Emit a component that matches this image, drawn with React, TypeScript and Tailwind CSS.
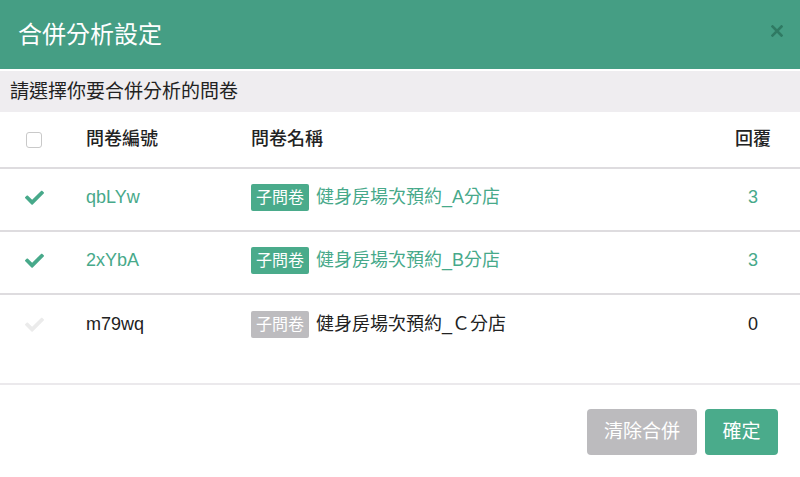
import React from "react";

const font = { fontFamily: '"Liberation Sans", "Noto Sans CJK TC", "Noto Sans", sans-serif' };

function Check({ active }: { active: boolean }) {
  return (
    <svg width="19" height="15" viewBox="0 0 512 400" className={active ? "text-[#47a98a]" : "text-[#ebebeb]"}>
      <path
        fill="currentColor"
        d="M173.9 389.8L7.5 223.4c-10-10-10-26.2 0-36.2l36.2-36.2c10-10 26.2-10 36.2 0L192 263.1 432.1 23c10-10 26.2-10 36.2 0l36.2 36.2c10 10 10 26.2 0 36.2L210.1 389.8c-10 10-26.2 10-36.2 0z"
      />
    </svg>
  );
}

const rows = [
  { id: "qbLYw", name: "健身房場次預約_A分店", reply: "3", on: true },
  { id: "2xYbA", name: "健身房場次預約_B分店", reply: "3", on: true },
  { id: "m79wq", name: "健身房場次預約_Ｃ分店", reply: "0", on: false },
];

export default function App() {
  return (
    <div className="w-[800px] h-[477px] bg-white flex flex-col overflow-hidden" style={font}>
      <div className="h-[69px] bg-[#459e84] flex items-center justify-between pl-[18px] pr-[17px] shrink-0">
        <span className="text-white text-[24px] leading-none">合併分析設定</span>
        <svg width="12" height="12" viewBox="0 0 12 12" className="mb-[8px]">
          <path d="M1.5 1.5L10.5 10.5M10.5 1.5L1.5 10.5" stroke="#2f7a63" strokeWidth="2.6" strokeLinecap="square" />
        </svg>
      </div>
      <div className="mt-[2px] h-[41px] bg-[#efedf0] flex items-center pl-[10px] text-[19px] text-[#222] shrink-0 leading-none">
        請選擇你要合併分析的問卷
      </div>
      <div className="flex flex-col">
        <div className="h-[57px] flex items-center border-b-2 border-[#dedcdf] text-[18px] text-[#222] font-medium">
          <div className="w-[86px] pl-[26px] flex items-center">
            <span className="w-[16px] h-[16px] border border-[#c9c9c9] rounded-[3px] bg-white"></span>
          </div>
          <div className="w-[165px]">問卷編號</div>
          <div className="flex-1">問卷名稱</div>
          <div className="w-[94px] text-center">回覆</div>
        </div>
        {rows.map((r, i) => (
          <div
            key={r.id}
            className={`h-[63px] flex items-center text-[18px] pb-[4px] ${i < rows.length - 1 ? "border-b-2 border-[#dedcdf]" : ""} ${r.on ? "text-[#47a98a]" : "text-[#222]"}`}
          >
            <div className="w-[86px] pl-[25px] flex items-center">
              <Check active={r.on} />
            </div>
            <div className="w-[165px]">{r.id}</div>
            <div className="flex-1 flex items-center gap-[7px]">
              <span
                className={`px-[5px] h-[27px] flex items-center rounded-[2px] text-white text-[16px] ${r.on ? "bg-[#4aab8b]" : "bg-[#bdbcbf]"}`}
              >
                子問卷
              </span>
              <span>{r.name}</span>
            </div>
            <div className="w-[94px] text-center">{r.reply}</div>
          </div>
        ))}
      </div>
      <div className="h-[27px] shrink-0 border-b-2 border-[#ebe9ec]"></div>
      <div className="flex justify-end items-center gap-[8px] pr-[22px] pt-[24px]">
        <button className="w-[110px] h-[46px] rounded-[4px] bg-[#bcbbbe] text-white text-[19px]">清除合併</button>
        <button className="w-[73px] h-[46px] rounded-[4px] bg-[#4aab8b] text-white text-[19px]">確定</button>
      </div>
    </div>
  );
}
